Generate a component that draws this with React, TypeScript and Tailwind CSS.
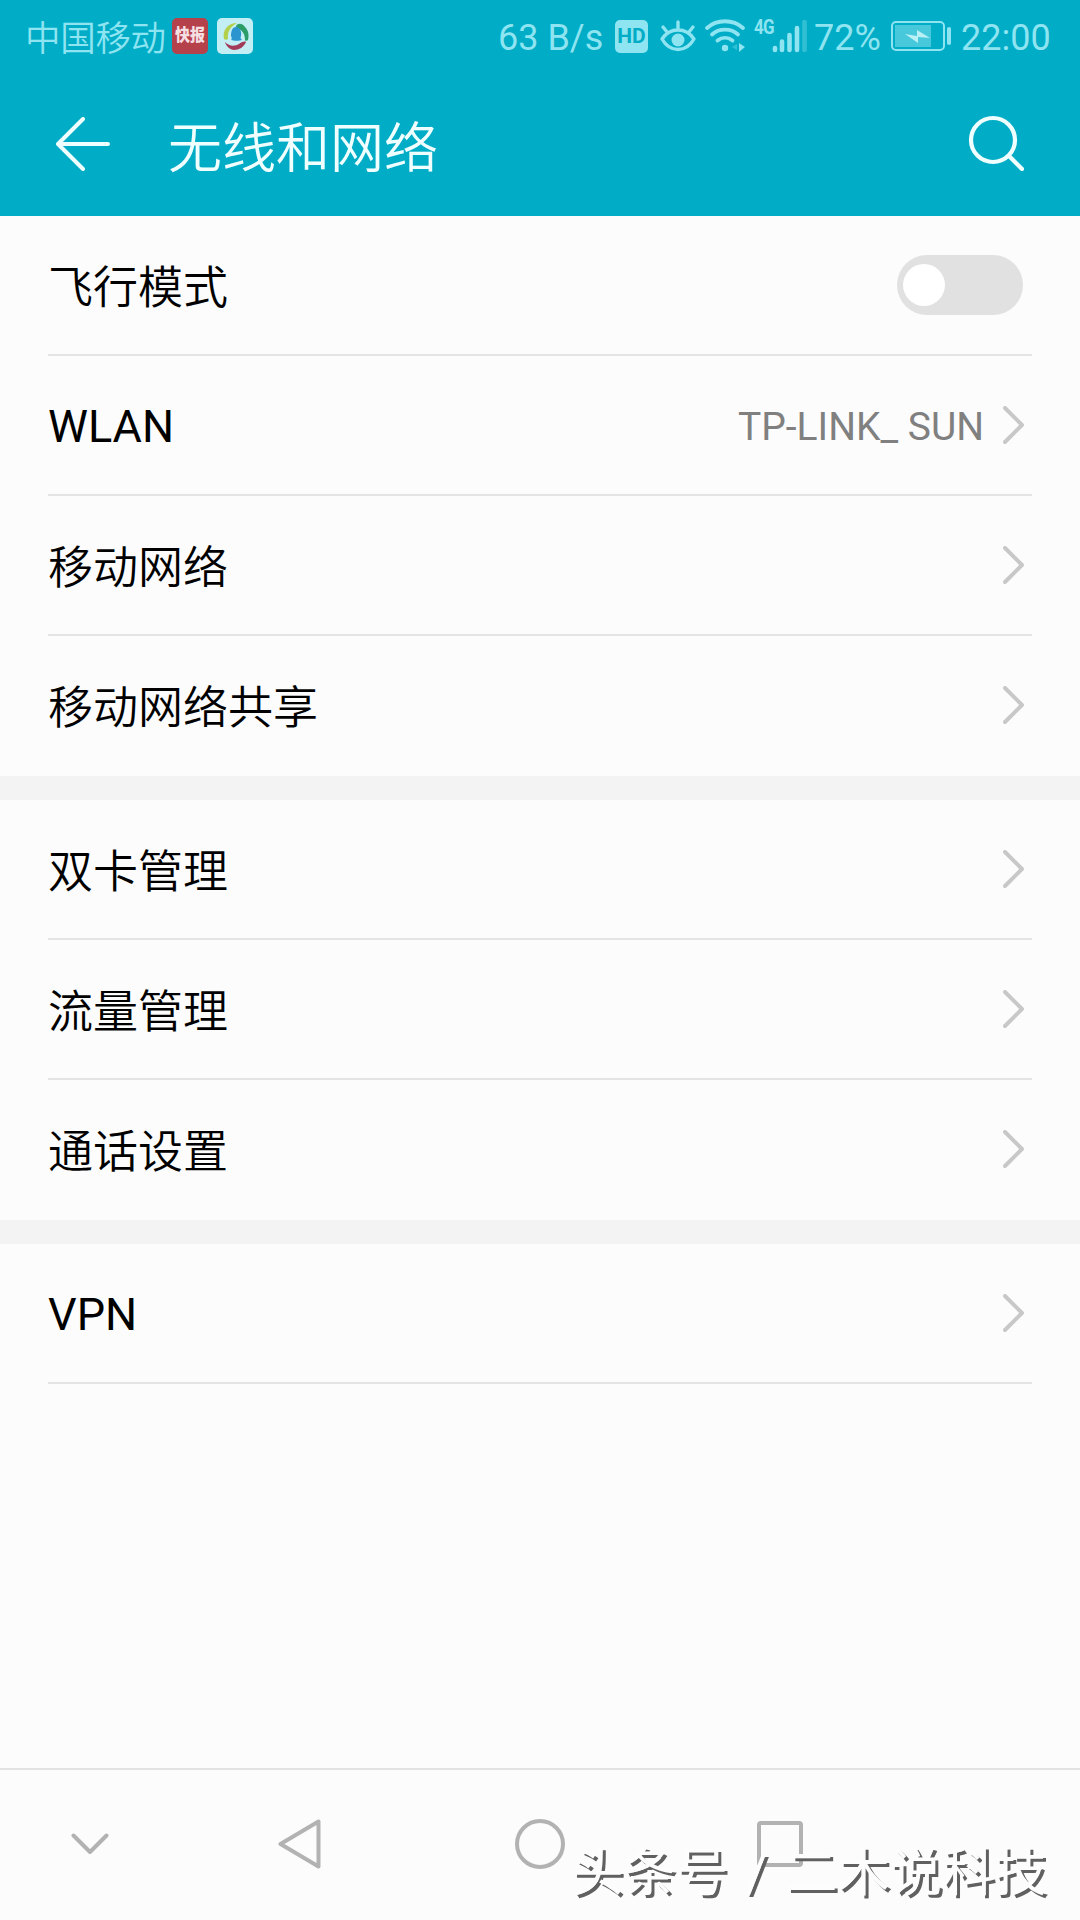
import React, { useState } from 'react';

interface SettingItem {
  label: string;
  value?: string;
  toggle?: boolean;
  latin?: boolean;
}

const groups: SettingItem[][] = [
  [
    { label: '飞行模式', toggle: true },
    { label: 'WLAN', value: 'TP-LINK_ SUN', latin: true },
    { label: '移动网络' },
    { label: '移动网络共享' }
  ],
  [
    { label: '双卡管理' },
    { label: '流量管理' },
    { label: '通话设置' }
  ],
  [
    { label: 'VPN', latin: true }
  ]
];

function StatusBar() {
  return (
    <div className="h-[72px] flex items-center pl-[25px] pr-[31px] text-[36px] leading-none text-[#8ee4f0]">
      <span className="w-[147px] pt-2 text-[35.5px] font-[350] tracking-[-0.3px] whitespace-nowrap">中国移动</span>
      <span className="w-9 h-9 rounded-[5px] bg-[#b5424a] flex items-center justify-center text-[15px] font-black text-[#f5dfe2]">
        <span className="scale-y-110">快报</span>
      </span>
      <svg className="w-9 h-9 ml-[9px]" viewBox="0 0 36 36" fill="none">
        <rect width="36" height="36" rx="5" fill="#c3eef3" />
        <path d="M20 5C11 5 5 12 7 21c1 1 3 1 4 0-1-7 2-12 9-16z" fill="#b2d04a" />
        <path d="M19 8c2-3 6-3 9 1 4 4 4 9 3 13-1 1-3 1-3 0 0-6-3-11-9-12z" fill="#2b9d68" />
        <path d="M8 24c5 5 10 4 14 2 2-2 6-3 7-2-2 5-7 8-12 8-4 0-8-4-9-8z" fill="#a33a58" />
        <path d="M14 22c1-1 1-2 0-4 0-4 1-9 5-9s6 5 5 9c-1 2 0 3 1 4-3 1-8 1-11 0z" fill="#2b95cf" />
      </svg>

      <div className="flex items-center ml-auto">
        <span className="w-[117px] pt-1 whitespace-nowrap">63 B/s</span>
        <span className="w-[33px] h-[33px] rounded-[5px] bg-[#8ee4f0] text-[#00acc6] text-[21px] font-bold flex items-center justify-center">HD</span>
        <svg className="w-9 h-9 ml-3" viewBox="0 0 36 36" fill="none" stroke="currentColor" strokeWidth="3.400" strokeLinecap="round">
          <path d="M2 21C10 9 26 9 34 21C26 35 10 35 2 21z" strokeLinejoin="round" />
          <circle cx="18" cy="22" r="6.500" fill="currentColor" stroke="none" />
          <path d="M18 4v6M3 9l4 5M33 9l-4 5" />
        </svg>
        <svg className="w-[42px] h-9 ml-2" viewBox="0 0 42 36" fill="none" stroke="currentColor" strokeWidth="3.800" strokeLinecap="round">
          <path d="M3 10C13 1 29 1 39 10M8 16.500C15 10 27 10 34 16.500M13.500 22.500C18 19 24 19 28.500 22.500" />
          <circle cx="21" cy="30" r="3.200" fill="currentColor" stroke="none" />
          <path d="M35 25v9l6-5z" fill="currentColor" stroke="none" />
          <path d="M33 26v6l-5-3z" fill="currentColor" opacity="0.35" stroke="none" />
        </svg>
        <span className="w-5 h-9 ml-2 text-[20px] leading-[18px] font-bold tracking-[-1px]">
          <span className="block origin-left scale-x-[0.85]">4G</span>
        </span>
        <svg className="w-9 h-9 -ml-0.5" viewBox="0 0 36 36" stroke="currentColor" strokeWidth="4.600" strokeLinecap="round">
          <path d="M3 30v2M10 23.500v8.500M17.500 17v15M25 10v22" />
          <path d="M32.500 4v28" opacity="0.35" />
        </svg>
        <span className="w-[76px] pt-1 ml-1.5 whitespace-nowrap">72%</span>
        <svg className="w-[60px] h-[30px] ml-px" viewBox="0 0 60 30" fill="none">
          <rect x="1" y="1" width="52" height="28" rx="4" stroke="currentColor" strokeWidth="2" />
          <rect x="4" y="4" width="36" height="22" fill="currentColor" opacity="0.5" />
          <path d="M14 13l12 2V9l13 8-12-1v6z" fill="#b9f0f5" />
          <rect x="56" y="6" width="4" height="18" rx="2" fill="currentColor" />
        </svg>
        <span className="ml-2.5 pt-1 w-[88px] whitespace-nowrap">22:00</span>
      </div>
    </div>
  );
}

function Header() {
  return (
    <header className="h-[216px] bg-[#00acc6]">
      <StatusBar />
      <div className="h-36 flex items-center pl-14 pr-14 text-[#f0ffff]">
        <svg className="w-[54px] h-[54px]" viewBox="0 0 54 54" fill="none" stroke="currentColor" strokeWidth="4" strokeLinecap="round" strokeLinejoin="round">
          <path d="M52 27H3M27 2L2 27l25 25" />
        </svg>
        <h1 className="ml-[58px] pt-3 text-[54px] leading-none font-[350]">无线和网络</h1>
        <svg className="w-14 h-14 ml-auto mb-0.5" viewBox="0 0 56 56" fill="none" stroke="currentColor" strokeWidth="4.200" strokeLinecap="round">
          <circle cx="25" cy="25" r="22" />
          <path d="M41 41l13 13" />
        </svg>
      </div>
    </header>
  );
}

function Switch({ checked, onChange }: { checked: boolean; onChange: () => void }) {
  return (
    <button
      onClick={onChange}
      className={`w-[126px] h-[60px] mr-[9px] px-1.5 rounded-full bg-[#e1e1e1] flex items-center ${checked ? 'justify-end' : 'justify-start'}`}
    >
      <span className="w-[42px] h-[42px] rounded-full bg-white" />
    </button>
  );
}

function Chevron() {
  return (
    <svg className="w-[21px] h-[38px] ml-[19px] mr-2" viewBox="0 0 21 38" fill="none" stroke="#c8c8c8" strokeWidth="4" strokeLinecap="round" strokeLinejoin="round">
      <path d="M2 2l17 17L2 36" />
    </svg>
  );
}

export default function App() {
  const [airplane, setAirplane] = useState(false);

  return (
    <div className="w-[1080px] h-[1920px] overflow-hidden relative flex flex-col bg-[#fcfcfc] font-[Roboto,'Noto_Sans_CJK_SC',sans-serif]">
      <Header />

      <main className="flex-1">
        {groups.map((items, g) => (
          <section key={g} className={g > 0 ? 'border-t-24 border-[#f3f3f3]' : ''}>
            {items.map((item, i) => (
              <div
                key={item.label}
                className={`mx-12 h-[140px] flex items-center border-b-2 ${i < items.length - 1 || g === groups.length - 1 ? 'border-[#e4e4e4]' : 'border-transparent'}`}
              >
                <span className={`text-[45px] leading-none text-black ${item.latin ? 'pt-0.5' : 'pt-1.5 font-[350]'}`}>{item.label}</span>
                <div className="ml-auto flex items-center">
                  {item.value && <span className="pt-1 text-[39px] leading-none text-[#808080]">{item.value}</span>}
                  {item.toggle ? <Switch checked={airplane} onChange={() => setAirplane(!airplane)} /> : <Chevron />}
                </div>
              </div>
            ))}
          </section>
        ))}
      </main>

      {/* Navigation bar */}
      <nav className="h-[152px] border-t-2 border-[#e2e2e2] flex items-center pb-0.5 text-[#b2b2b2]">
        <svg className="w-[38px] h-[22px] ml-[71px]" viewBox="0 0 38 22" fill="none" stroke="currentColor" strokeWidth="4" strokeLinecap="round" strokeLinejoin="round">
          <path d="M2.500 2.500L19 19 35.500 2.500" />
        </svg>
        <svg className="w-[43px] h-[50px] ml-[169px]" viewBox="0 0 43 50" fill="none" stroke="currentColor" strokeWidth="4" strokeLinejoin="round">
          <path d="M40.500 2.500v45L2.500 25z" />
        </svg>
        <span className="w-[50px] h-[50px] ml-[194px] rounded-full border-4 border-current" />
        <span className="w-[46px] h-[46px] ml-48 rounded border-4 border-current" />
      </nav>

      {/* Author mark */}
      <div className="absolute left-[571px] top-[1845px] text-[52.5px] leading-[56px] tracking-[-0.2px] [word-spacing:5px] whitespace-nowrap text-[#fdfdfd] [text-shadow:3px_3px_0_#606060]">
        头条号 / 二木说科技
      </div>
    </div>
  );
}
